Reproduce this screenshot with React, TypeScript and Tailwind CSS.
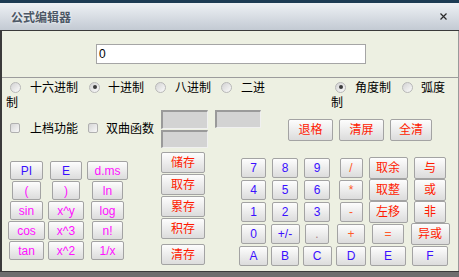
import React from 'react';

const FONT = "font-['Liberation_Sans','Noto_Sans_CJK_SC',sans-serif]";
const CN = "font-['Noto_Sans_CJK_SC',sans-serif]";

const BLUE = 'text-[#3a10ff]';
const PINK = 'text-[#ff10ff]';
const RED = 'text-[#ff1a00]';
const OP = 'text-[#ff5a2a]';

type B = { t: string; w: string; c: string; h?: string };

function Btn({ t, w, c, h = 'h-[20px]' }: B) {
  return (
    <button
      className={`${w} ${h} ${c} ${FONT} flex shrink-0 items-center justify-center rounded-[2px] border border-[#a3a3a3] bg-gradient-to-b from-[#fdfdfd] to-[#dcdcdc] text-[12px] leading-none`}
    >
      {t}
    </button>
  );
}

function Radio({ on, cls }: { on?: boolean; cls: string }) {
  return (
    <span className={`${cls} flex h-[11px] w-[11px] shrink-0 items-center justify-center rounded-full border border-[#b8b8b8] bg-gradient-to-br from-[#d3d3d3] to-[#fbfbfb]`}>
      {on && <span className="h-[4px] w-[4px] rounded-full bg-[#3c3c3c]" />}
    </span>
  );
}

function Check({ cls }: { cls: string }) {
  return <span className={`${cls} h-[10px] w-[10px] shrink-0 rounded-[2px] border border-[#b0b0b0] bg-gradient-to-br from-[#d6d6d6] to-[#f8f8f8]`} />;
}

const fnRows: B[][] = [
  [{ t: 'PI', w: 'w-[33px]', c: BLUE }, { t: 'E', w: 'w-[32px]', c: BLUE }, { t: 'd.ms', w: 'w-[41px]', c: PINK }],
  [{ t: '(', w: 'w-[29px]', c: PINK }, { t: ')', w: 'w-[28px]', c: PINK }, { t: 'ln', w: 'w-[31px]', c: PINK }],
  [{ t: 'sin', w: 'w-[33px]', c: PINK }, { t: 'x^y', w: 'w-[36px]', c: PINK }, { t: 'log', w: 'w-[33px]', c: PINK }],
  [{ t: 'cos', w: 'w-[37px]', c: PINK }, { t: 'x^3', w: 'w-[36px]', c: PINK }, { t: 'n!', w: 'w-[31px]', c: PINK }],
  [{ t: 'tan', w: 'w-[35px]', c: PINK }, { t: 'x^2', w: 'w-[36px]', c: PINK }, { t: '1/x', w: 'w-[33px]', c: PINK }],
];

const H22 = 'h-[22px]';
const numRows: B[][] = [
  [
    { t: '7', w: 'w-[25px]', c: BLUE }, { t: '8', w: 'w-[26px]', c: BLUE }, { t: '9', w: 'w-[26px]', c: BLUE },
    { t: '/', w: 'w-[23px]', c: OP }, { t: '取余', w: 'w-[39px]', c: RED, h: H22 }, { t: '与', w: 'w-[32px]', c: RED, h: H22 },
  ],
  [
    { t: '4', w: 'w-[25px]', c: BLUE }, { t: '5', w: 'w-[26px]', c: BLUE }, { t: '6', w: 'w-[26px]', c: BLUE },
    { t: '*', w: 'w-[24px]', c: OP }, { t: '取整', w: 'w-[39px]', c: RED, h: H22 }, { t: '或', w: 'w-[32px]', c: RED, h: H22 },
  ],
  [
    { t: '1', w: 'w-[25px]', c: BLUE }, { t: '2', w: 'w-[26px]', c: BLUE }, { t: '3', w: 'w-[26px]', c: BLUE },
    { t: '-', w: 'w-[23px]', c: OP }, { t: '左移', w: 'w-[39px]', c: RED, h: H22 }, { t: '非', w: 'w-[32px]', c: RED, h: H22 },
  ],
  [
    { t: '0', w: 'w-[25px]', c: BLUE }, { t: '+/-', w: 'w-[29px]', c: BLUE }, { t: '.', w: 'w-[24px]', c: 'text-[#b08080]' },
    { t: '+', w: 'w-[28px]', c: OP }, { t: '=', w: 'w-[32px]', c: OP }, { t: '异或', w: 'w-[39px]', c: RED, h: H22 },
  ],
  [
    { t: 'A', w: 'w-[29px]', c: BLUE }, { t: 'B', w: 'w-[28px]', c: BLUE }, { t: 'C', w: 'w-[29px]', c: BLUE },
    { t: 'D', w: 'w-[30px]', c: BLUE }, { t: 'E', w: 'w-[36px]', c: BLUE }, { t: 'F', w: 'w-[36px]', c: BLUE },
  ],
];

const box = 'bg-[#d3d3d3] border-t-2 border-l-2 border-r border-b border-t-[#9a9a9a] border-l-[#9a9a9a] border-r-[#f0f0f0] border-b-[#f0f0f0]';

export default function App() {
  return (
    <div className="flex h-[277px] w-[459px] flex-col overflow-hidden bg-[#6a6a6a]">
      <div className="h-[3px] bg-[#1d3b54]" />
      <div className="flex h-[27px] items-center justify-between bg-gradient-to-b from-[#eef1f5] to-[#c3cad3] pl-[11px] pr-[12px]">
        <span className={`${CN} text-[12px] font-bold leading-none text-[#4d5866] [text-shadow:0_0_3px_#ffffff]`}>公式编辑器</span>
        <svg width="7" height="7" viewBox="0 0 7 7" className="mt-[-1px]">
          <path d="M0.5 0.5 L6.5 6.5 M6.5 0.5 L0.5 6.5" stroke="#2a2a2a" strokeWidth="1.2" />
        </svg>
      </div>
      <div className="h-px bg-[#3a3a3a]" />

      <div className={`${CN} flex h-[240px] flex-col border-l-2 border-r border-l-[#3a3a3a] border-r-[#9a9a9a] bg-[#edf0e2] text-[12px] leading-none text-black`}>
        <div className={`${FONT} ml-[94px] mt-[13px] flex h-[20px] w-[270px] items-center border border-[#a5a5a5] bg-white pl-[2px] text-[12px]`}>0</div>
        <div className="mt-[13px] border-t border-[#9c9c9c]" />

        <div className="flex h-[18px] items-center">
          <Radio cls="ml-[8px]" />
          <span className="ml-[9px]">十六进制</span>
          <Radio on cls="ml-[11px]" />
          <span className="ml-[8px]">十进制</span>
          <Radio cls="ml-[11px]" />
          <span className="ml-[9px]">八进制</span>
          <Radio cls="ml-[10px]" />
          <span className="ml-[9px]">二进</span>
          <Radio on cls="ml-[70px]" />
          <span className="ml-[9px]">角度制</span>
          <Radio cls="ml-[11px]" />
          <span className="ml-[8px]">弧度</span>
        </div>
        <div className="flex h-[12px] items-center">
          <span className="ml-[4px]">制</span>
          <span className="ml-[313px]">制</span>
        </div>

        <div className="flex h-[163px]">
          <div className="w-[159px]">
            <div className="mt-[15px] flex h-[10px] items-center">
              <Check cls="ml-[8px]" />
              <span className="ml-[10px]">上档功能</span>
              <Check cls="ml-[10px]" />
              <span className="ml-[8px]">双曲函数</span>
            </div>
            <div className="ml-[4px] mt-[28px] grid grid-cols-[41px_38px_45px]">
              {fnRows.flat().map((b, i) => (
                <div key={i} className="flex h-[20px] items-start justify-center">
                  <Btn {...b} h="h-[19px]" />
                </div>
              ))}
            </div>
          </div>

          <div className="w-[54px]">
            <div className={`${box} mt-[2px] h-[19px] w-[47px]`} />
            <div className={`${box} mt-[1px] h-[18px] w-[47px]`} />
            <div className="mt-[4px] flex flex-col gap-px">
              {['储存', '取存', '累存', '积存'].map(t => (
                <Btn key={t} t={t} w="w-[44px]" h="h-[21px]" c={RED} />
              ))}
            </div>
            <div className="mt-[5px]">
              <Btn t="清存" w="w-[44px]" h="h-[21px]" c={RED} />
            </div>
          </div>

          <div className="flex-1">
            <div className="flex h-[33px] items-start">
              <div className={`${box} mt-[2px] h-[18px] w-[46px]`} />
              <div className="ml-[27px] mt-[11px] flex gap-[6px]">
                <Btn t="退格" w="w-[45px]" h="h-[22px]" c={RED} />
                <Btn t="清屏" w="w-[45px]" h="h-[22px]" c={RED} />
                <Btn t="全清" w="w-[42px]" h="h-[22px]" c={RED} />
              </div>
            </div>
            <div className="ml-[22px] mt-[16px] grid grid-cols-[33px_30px_34px_34px_40px_44px]">
              {numRows.flat().map((b, i) => (
                <div key={i} className="flex h-[22px] items-center justify-center">
                  <Btn {...b} />
                </div>
              ))}
            </div>
          </div>
        </div>
      </div>
      <div className="h-px bg-[#3a3a3a]" />
      <div className="flex-1 bg-[#6e6e6e]" />
    </div>
  );
}
